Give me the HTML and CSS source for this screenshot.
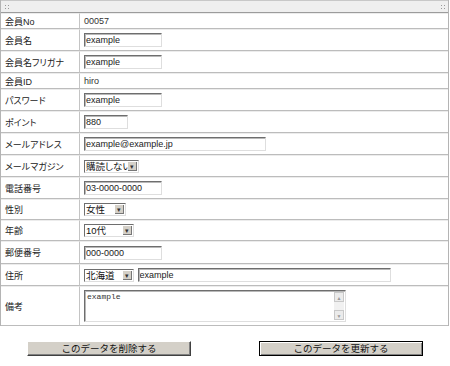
FILE: index.html
```html
<!DOCTYPE html>
<html lang="ja">
<head>
  <meta charset="UTF-8">
  <title>会員情報</title>
  <link rel="stylesheet" href="styles.css">
</head>
<body>

  <!-- MEMBER FORM -->
  <div class="panel">
    <div class="panel-head">
      <span class="grip"></span>
      <span class="grip"></span>
    </div>
    <table class="form">
      <tr class="row-text">
        <th>会員No</th>
        <td>00057</td>
      </tr>
      <tr>
        <th>会員名</th>
        <td><input type="text" class="txt w78" value="example"></td>
      </tr>
      <tr>
        <th>会員名フリガナ</th>
        <td><input type="text" class="txt w78" value="example"></td>
      </tr>
      <tr class="row-text">
        <th>会員ID</th>
        <td>hiro</td>
      </tr>
      <tr>
        <th>パスワード</th>
        <td><input type="text" class="txt w78" value="example"></td>
      </tr>
      <tr>
        <th>ポイント</th>
        <td><input type="text" class="txt w44" value="880"></td>
      </tr>
      <tr>
        <th>メールアドレス</th>
        <td><input type="text" class="txt w182" value="example@example.jp"></td>
      </tr>
      <tr>
        <th>メールマガジン</th>
        <td><span class="sel w55"><select><option>購読しない</option></select></span></td>
      </tr>
      <tr>
        <th>電話番号</th>
        <td><input type="text" class="txt w78" value="03-0000-0000"></td>
      </tr>
      <tr class="row-sel">
        <th>性別</th>
        <td><span class="sel w42"><select><option>女性</option></select></span></td>
      </tr>
      <tr class="row-sel">
        <th>年齢</th>
        <td><span class="sel w50"><select><option>10代</option></select></span></td>
      </tr>
      <tr class="row-zip">
        <th>郵便番号</th>
        <td><input type="text" class="txt w78" value="000-0000"></td>
      </tr>
      <tr>
        <th>住所</th>
        <td class="addr">
          <span class="sel w50"><select><option>北海道</option></select></span>
          <input type="text" class="txt w253" value="example">
        </td>
      </tr>
      <tr class="row-note">
        <th>備考</th>
        <td>
          <span class="memo">
            <textarea>example</textarea>
            <span class="scroll"><span class="sbtn">▲</span><span class="sbtn">▼</span></span>
          </span>
        </td>
      </tr>
    </table>
  </div>

  <div class="actions">
    <button class="btn">このデータを削除する</button>
    <button class="btn btn-default">このデータを更新する</button>
  </div>

</body>
</html>
```

FILE: styles.css
```css
body {
  margin: 0;
  font-family: 'Liberation Sans', 'Noto Sans CJK JP', sans-serif;
  font-size: 9px;
  color: #333;
  background: #fff;
}

.panel {
  width: 447px;
  border-left: 1px solid #b4b4b4;
  border-right: 1px solid #b4b4b4;
}

.panel-head {
  height: 11px;
  display: flex;
  justify-content: space-between;
  align-items: center;
  padding: 0 3px;
  background-color: #efefef;
  background-image: radial-gradient(#dcdcdc 0.6px, transparent 0.7px);
  background-size: 2px 2px;
  border-top: 1px solid #c8c8c8;
  border-bottom: 1px solid #9c9c9c;
}

.grip {
  width: 5px;
  height: 5px;
  background-image: radial-gradient(#9a9a9a 0.8px, transparent 0.9px);
  background-size: 3px 3px;
}

.form {
  width: 100%;
  border-collapse: separate;
  border-spacing: 0;
  font-feature-settings: "palt";
}

.form th,
.form td {
  height: 20px;
  padding: 0 4px;
  text-align: left;
  font-weight: normal;
  vertical-align: middle;
  border-top: 1px solid #ececec;
  border-bottom: 1px solid #bcbcbc;
}

.form th {
  width: 70px;
  border-right: 1px solid #c4c4c4;
  white-space: nowrap;
  color: #222;
}

.form .row-text th,
.form .row-text td {
  height: 14px;
}

.form .row-sel th,
.form .row-sel td {
  height: 19px;
}

.form .row-zip th,
.form .row-zip td {
  height: 21px;
}

.form .row-note th,
.form .row-note td {
  height: 38px;
}

.txt {
  box-sizing: border-box;
  height: 14px;
  margin: 0;
  padding: 0 1px;
  font: inherit;
  color: #222;
  background: #fff;
  border: 1px solid;
  border-color: #6e6e6e #dedede #dedede #6e6e6e;
  box-shadow: inset 1px 1px 0 #b8b8b8;
  vertical-align: middle;
}

.w44 { width: 44px; }
.w78 { width: 78px; }
.w182 { width: 182px; }
.w253 { width: 253px; }

.sel {
  position: relative;
  display: inline-block;
  box-sizing: border-box;
  height: 13px;
  vertical-align: middle;
  border: 1px solid #6e6e6e;
  border-right-color: #dedede;
  border-bottom-color: #dedede;
  background: #fff;
}

.w42 { width: 42px; }
.w50 { width: 50px; }
.w55 { width: 55px; }

.sel select {
  appearance: none;
  -webkit-appearance: none;
  width: 100%;
  height: 11px;
  margin: 0;
  padding: 0 0 0 1px;
  border: none;
  outline: none;
  background: transparent;
  font: inherit;
  font-size: 9.5px;
  line-height: 11px;
  color: #111;
}

.sel::after {
  content: "▾";
  position: absolute;
  top: 1px;
  right: 1px;
  width: 9px;
  height: 9px;
  font-size: 7px;
  line-height: 9px;
  text-align: center;
  color: #333;
  background: #d4d0c8;
  border-right: 1px solid #777;
  border-bottom: 1px solid #777;
  box-sizing: border-box;
}

.addr {
  white-space: nowrap;
}

.addr .txt {
  margin-left: 1px;
}

.memo {
  position: relative;
  display: block;
  width: 262px;
  height: 32px;
  box-sizing: border-box;
  border: 1px solid;
  border-color: #6e6e6e #dedede #dedede #6e6e6e;
  box-shadow: inset 1px 1px 0 #b8b8b8;
}

.memo textarea {
  display: block;
  width: 250px;
  height: 30px;
  box-sizing: border-box;
  margin: 0;
  padding: 1px 2px;
  border: none;
  outline: none;
  resize: none;
  overflow: hidden;
  background: transparent;
  font-family: 'Liberation Mono', monospace;
  font-size: 8px;
  color: #333;
}

.scroll {
  position: absolute;
  top: 1px;
  right: 1px;
  bottom: 1px;
  width: 10px;
  display: flex;
  flex-direction: column;
  justify-content: space-between;
  background: #f1f1f1;
}

.sbtn {
  height: 10px;
  font-size: 5px;
  line-height: 10px;
  text-align: center;
  color: #999;
  background: #ebebeb;
  border: 1px solid #c8c8c8;
  box-sizing: border-box;
}

.actions {
  display: flex;
  gap: 68px;
  padding: 15px 0 0 27px;
}

.btn {
  width: 164px;
  height: 15px;
  margin: 0;
  padding: 0;
  font-family: 'Noto Sans CJK JP', sans-serif;
  font-size: 9.5px;
  line-height: 11px;
  color: #111;
  background: #d4d0c8;
  border: 1px solid;
  border-color: #fff #404040 #404040 #fff;
  box-shadow: inset -1px -1px 0 #808080;
}

.btn-default {
  border: 1px solid #000;
  box-shadow: inset 1px 1px 0 #fff, inset -1px -1px 0 #808080;
}
```
